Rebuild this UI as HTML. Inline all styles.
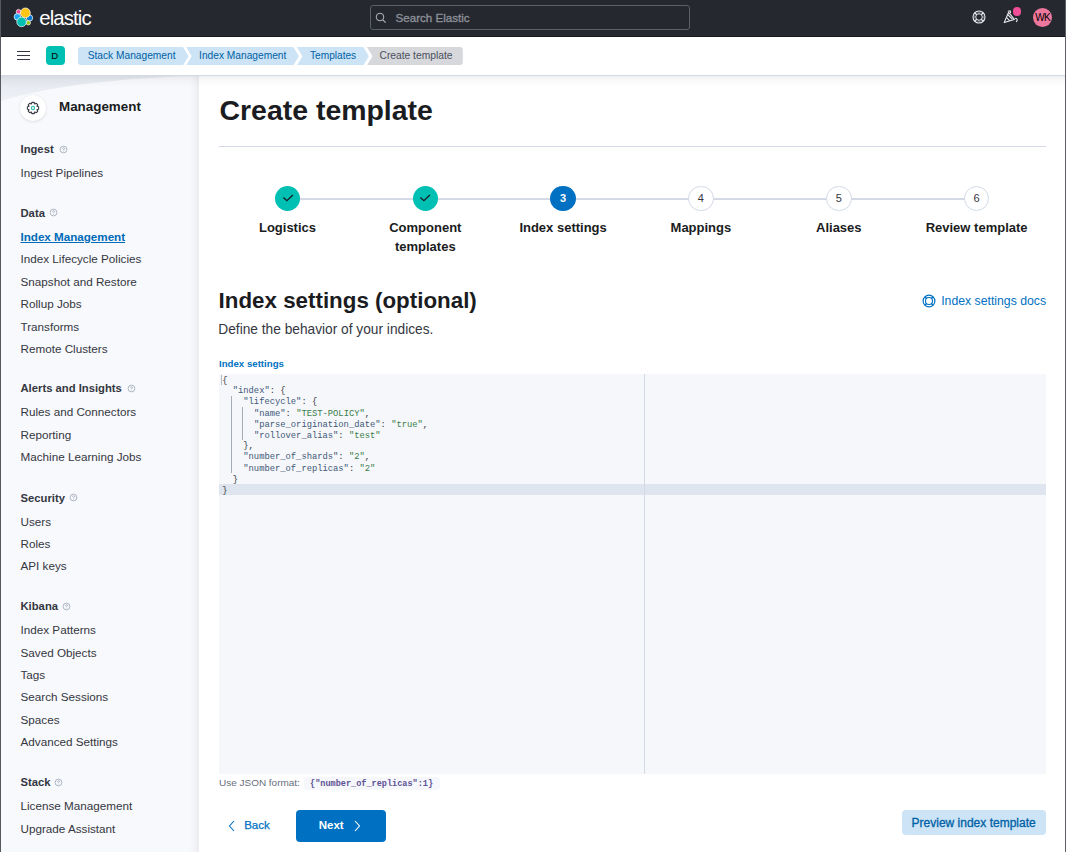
<!DOCTYPE html>
<html><head><meta charset="utf-8"><title>Create template</title>
<style>
html,body{margin:0;padding:0;}
body{width:1066px;height:852px;overflow:hidden;position:relative;background:#fff;font-family:"Liberation Sans",sans-serif;}
.r{position:absolute;box-sizing:content-box;}
.t{position:absolute;white-space:nowrap;}
.code{position:absolute;margin:0;font-family:"Liberation Mono",monospace;font-size:8.8px;line-height:10.185px;color:#000;transform:scaleY(1.08);transform-origin:0 0;}
.code .k{color:#3f5878;}
.code .s{color:#3a7d4a;}
.code .p{color:#343741;}
</style></head><body>
<div class="r" style="left:0px;top:0px;width:1066px;height:852px;background:#ffffff;"></div>
<div class="r" style="left:1px;top:76px;width:197px;height:776px;background:#f8f9fc;"></div>
<svg class="r" style="left:1px;top:76px" width="197" height="30" viewBox="0 0 197 30"><defs><linearGradient id="sg" x1="0" y1="0" x2="0" y2="1"><stop offset="0" stop-color="#e4e8ef"/><stop offset="1" stop-color="#eef0f5"/></linearGradient></defs><path d="M0 0 H197 C150 1 60 6 0 25 Z" fill="url(#sg)"/></svg>
<div class="r" style="left:189px;top:76px;width:10px;height:776px;background:linear-gradient(to right, rgba(130,136,148,0), rgba(130,136,148,0.06) 70%, rgba(130,136,148,0.16));"></div>
<div class="r" style="left:0px;top:0px;width:1066px;height:36px;background:#25282f;"></div>
<div class="r" style="left:0px;top:36px;width:1066px;height:1px;background:#17191d;"></div>
<div class="r" style="left:0px;top:75px;width:1066px;height:1px;background:#d3dae6;"></div>
<div class="r" style="left:1px;top:76px;width:1064px;height:11px;background:linear-gradient(rgba(60,60,60,0.075),rgba(60,60,60,0.03) 40%,rgba(60,60,60,0));"></div>
<div class="r" style="left:0px;top:0px;width:1px;height:852px;background:#55585f;"></div>
<div class="r" style="left:1065px;top:0px;width:1px;height:852px;background:#5d6066;"></div>
<svg class="r" style="left:13px;top:7px" width="22" height="22" viewBox="13 7 22 22">
<g stroke="#ffffff" stroke-width="0.7">
<circle cx="18.6" cy="11.8" r="2.4" fill="#f04e98"/>
<circle cx="17.4" cy="16.9" r="3.3" fill="#1ba9f5"/>
<circle cx="29.5" cy="17.9" r="3.2" fill="#0779d1"/>
<circle cx="28.3" cy="22.8" r="2.2" fill="#93c90e"/>
<circle cx="21.6" cy="21.9" r="4.8" fill="#00bfb3"/>
<circle cx="25.4" cy="12.9" r="4.9" fill="#fec514"/>
</g></svg>
<div class="t " style="left:39.30px;top:8.03px;font-size:20.4px;line-height:20.4px;color:#ffffff;font-weight:400;font-family:'Liberation Sans', sans-serif;letter-spacing:-0.9px;">elastic</div>
<div class="r" style="left:370px;top:5px;width:318px;height:23px;border:1px solid #5b5f67;border-radius:3px;background:#25282f"></div>
<svg class="r" style="left:375px;top:12px" width="12" height="12" viewBox="0 0 12 12"><circle cx="5" cy="5" r="3.8" fill="none" stroke="#b5b8be" stroke-width="1"/><path d="M7.8 7.8 L10.6 10.6" stroke="#b5b8be" stroke-width="1.1"/></svg>
<div class="t " style="left:395.50px;top:12.18px;font-size:11.6px;line-height:11.6px;color:#8b8f97;font-weight:400;font-family:'Liberation Sans', sans-serif;-webkit-text-stroke:0.35px #8b8f97;">Search Elastic</div>
<svg class="r" style="left:970.5px;top:9px" width="16" height="16" viewBox="0 0 16 16"><g fill="none" stroke="#e8eaee"><circle cx="8" cy="8" r="6.0" stroke-width="1.1"/><circle cx="8" cy="8" r="3.3" stroke-width="1.0"/><path d="M3.8 3.8 L5.7 5.7 M12.2 3.8 L10.3 5.7 M3.8 12.2 L5.7 10.3 M12.2 12.2 L10.3 10.3" stroke-width="1.3"/><path d="M6.5 3.4 Q8 3.1 9.5 3.4 M6.5 12.6 Q8 12.9 9.5 12.6 M3.4 6.5 Q3.1 8 3.4 9.5 M12.6 6.5 Q12.9 8 12.6 9.5" stroke-width="0.7" opacity="0.6"/></g></svg>
<svg class="r" style="left:1002px;top:9px" width="18" height="16" viewBox="0 0 18 16"><g fill="none" stroke="#e8eaee" stroke-width="1.1" stroke-linejoin="round" stroke-linecap="round"><path d="M6.6 3.3 L2.2 13.6 L12.4 10.4 Z"/><path d="M5.8 5.6 L10.2 10"/><path d="M4.7 8.6 L7.3 11.3"/><path d="M6.2 2.2 L8.2 1.8 L8.6 3.6"/><path d="M13.6 9.4 Q15.4 9.6 15.2 11.5 L14.4 12.6"/></g></svg>
<div class="r" style="left:1012.8px;top:7px;width:8.6px;height:8.6px;border-radius:50%;background:#f04e98"></div>
<div class="r" style="left:1033px;top:8px;width:19px;height:19px;border-radius:50%;background:#ee789d"></div>
<div class="t " style="left:1035.30px;top:13.14px;font-size:10.0px;line-height:10.0px;color:#000000;font-weight:400;font-family:'Liberation Sans', sans-serif;letter-spacing:-0.75px;">WK</div>
<div class="r" style="left:17px;top:51px;width:13px;height:1.3px;background:#343741;"></div>
<div class="r" style="left:17px;top:55.1px;width:13px;height:1.3px;background:#343741;"></div>
<div class="r" style="left:17px;top:59.2px;width:13px;height:1.3px;background:#343741;"></div>
<div class="r" style="left:46px;top:46px;width:19px;height:19px;border-radius:4px;background:#00bfb3"></div>
<div class="t " style="left:51.30px;top:50.96px;font-size:9.5px;line-height:9.5px;color:#000000;font-weight:400;font-family:'Liberation Sans', sans-serif;">D</div>
<div class="r" style="left:78px;top:47px;width:110.6px;height:18.4px;background:#cce4f5;clip-path:polygon(0 0, 105.0px 0, 110.6px 50%, 105.0px 100%, 0 100%);border-radius:3px 0 0 3px;"></div>
<div class="r" style="left:186.1px;top:47px;width:112.79999999999998px;height:18.4px;background:#cce4f5;clip-path:polygon(0 0, 107.19999999999999px 0, 112.79999999999998px 50%, 107.19999999999999px 100%, 0 100%, 5.6px 50%);"></div>
<div class="r" style="left:296.9px;top:47px;width:72.0px;height:18.4px;background:#cce4f5;clip-path:polygon(0 0, 66.4px 0, 72.0px 50%, 66.4px 100%, 0 100%, 5.6px 50%);"></div>
<div class="r" style="left:366.9px;top:47px;width:95.90000000000003px;height:18.4px;background:#d6d8dc;clip-path:polygon(0 0, 100% 0, 100% 100%, 0 100%, 5.6px 50%);border-radius:0 3px 3px 0;"></div>
<div class="t " style="left:87.70px;top:51.37px;font-size:10.2px;line-height:10.2px;color:#0061a6;font-weight:400;font-family:'Liberation Sans', sans-serif;">Stack Management</div>
<div class="t " style="left:199.10px;top:51.37px;font-size:10.2px;line-height:10.2px;color:#0061a6;font-weight:400;font-family:'Liberation Sans', sans-serif;">Index Management</div>
<div class="t " style="left:310.00px;top:51.41px;font-size:10.15px;line-height:10.15px;color:#0061a6;font-weight:400;font-family:'Liberation Sans', sans-serif;">Templates</div>
<div class="t " style="left:379.50px;top:51.32px;font-size:10.25px;line-height:10.25px;color:#4b505b;font-weight:400;font-family:'Liberation Sans', sans-serif;">Create template</div>
<div class="r" style="left:20px;top:94.5px;width:26px;height:26px;border-radius:50%;background:#fff;box-shadow:0 1px 3px rgba(0,0,0,0.10),0 0 1px rgba(0,0,0,0.08)"></div>
<svg class="r" style="left:26px;top:100.5px" width="14" height="14" viewBox="0 0 14 14"><path d="M11.16 5.57 L12.62 5.80 L12.62 8.20 L11.16 8.43 L10.95 8.93 L11.82 10.13 L10.13 11.82 L8.93 10.95 L8.43 11.16 L8.20 12.62 L5.80 12.62 L5.57 11.16 L5.07 10.95 L3.87 11.82 L2.18 10.13 L3.05 8.93 L2.84 8.43 L1.38 8.20 L1.38 5.80 L2.84 5.57 L3.05 5.07 L2.18 3.87 L3.87 2.18 L5.07 3.05 L5.57 2.84 L5.80 1.38 L8.20 1.38 L8.43 2.84 L8.93 3.05 L10.13 2.18 L11.82 3.87 L10.95 5.07 Z" fill="none" stroke="#343741" stroke-width="1.05" stroke-linejoin="round"/><circle cx="7" cy="7" r="1.6" fill="none" stroke="#3ebeb0" stroke-width="1.2"/></svg>
<div class="t " style="left:59.00px;top:99.66px;font-size:13.4px;line-height:13.4px;color:#1a1c21;font-weight:700;font-family:'Liberation Sans', sans-serif;">Management</div>
<div class="t " style="left:20.50px;top:144.18px;font-size:11.25px;line-height:11.25px;color:#343741;font-weight:700;font-family:'Liberation Sans', sans-serif;">Ingest</div>
<svg class="r" style="left:58.5px;top:144.5px" width="9" height="9" viewBox="0 0 9 9"><circle cx="4.5" cy="4.5" r="3.4" fill="none" stroke="#98a2b3" stroke-width="0.75"/><path d="M3.5 3.7 Q3.6 2.7 4.5 2.7 Q5.5 2.7 5.5 3.6 Q5.5 4.3 4.6 4.6 V5.3" fill="none" stroke="#98a2b3" stroke-width="0.75"/><circle cx="4.6" cy="6.3" r="0.4" fill="#98a2b3"/></svg>
<div class="t " style="left:20.50px;top:167.10px;font-size:11.7px;line-height:11.7px;color:#343741;font-weight:400;font-family:'Liberation Sans', sans-serif;">Ingest Pipelines</div>
<div class="t " style="left:20.50px;top:208.08px;font-size:11.25px;line-height:11.25px;color:#343741;font-weight:700;font-family:'Liberation Sans', sans-serif;">Data</div>
<svg class="r" style="left:49.0px;top:208.4px" width="9" height="9" viewBox="0 0 9 9"><circle cx="4.5" cy="4.5" r="3.4" fill="none" stroke="#98a2b3" stroke-width="0.75"/><path d="M3.5 3.7 Q3.6 2.7 4.5 2.7 Q5.5 2.7 5.5 3.6 Q5.5 4.3 4.6 4.6 V5.3" fill="none" stroke="#98a2b3" stroke-width="0.75"/><circle cx="4.6" cy="6.3" r="0.4" fill="#98a2b3"/></svg>
<div class="t " style="left:20.50px;top:231.00px;font-size:11.7px;line-height:11.7px;color:#006bb8;font-weight:700;font-family:'Liberation Sans', sans-serif;letter-spacing:-0.04px;text-decoration:underline;text-underline-offset:1px;text-decoration-thickness:1px;">Index Management</div>
<div class="t " style="left:20.50px;top:253.40px;font-size:11.7px;line-height:11.7px;color:#343741;font-weight:400;font-family:'Liberation Sans', sans-serif;">Index Lifecycle Policies</div>
<div class="t " style="left:20.50px;top:275.80px;font-size:11.7px;line-height:11.7px;color:#343741;font-weight:400;font-family:'Liberation Sans', sans-serif;">Snapshot and Restore</div>
<div class="t " style="left:20.50px;top:298.20px;font-size:11.7px;line-height:11.7px;color:#343741;font-weight:400;font-family:'Liberation Sans', sans-serif;">Rollup Jobs</div>
<div class="t " style="left:20.50px;top:320.60px;font-size:11.7px;line-height:11.7px;color:#343741;font-weight:400;font-family:'Liberation Sans', sans-serif;">Transforms</div>
<div class="t " style="left:20.50px;top:343.00px;font-size:11.7px;line-height:11.7px;color:#343741;font-weight:400;font-family:'Liberation Sans', sans-serif;">Remote Clusters</div>
<div class="t " style="left:20.50px;top:383.38px;font-size:11.25px;line-height:11.25px;color:#343741;font-weight:700;font-family:'Liberation Sans', sans-serif;">Alerts and Insights</div>
<svg class="r" style="left:126.5px;top:383.7px" width="9" height="9" viewBox="0 0 9 9"><circle cx="4.5" cy="4.5" r="3.4" fill="none" stroke="#98a2b3" stroke-width="0.75"/><path d="M3.5 3.7 Q3.6 2.7 4.5 2.7 Q5.5 2.7 5.5 3.6 Q5.5 4.3 4.6 4.6 V5.3" fill="none" stroke="#98a2b3" stroke-width="0.75"/><circle cx="4.6" cy="6.3" r="0.4" fill="#98a2b3"/></svg>
<div class="t " style="left:20.50px;top:406.30px;font-size:11.7px;line-height:11.7px;color:#343741;font-weight:400;font-family:'Liberation Sans', sans-serif;">Rules and Connectors</div>
<div class="t " style="left:20.50px;top:428.70px;font-size:11.7px;line-height:11.7px;color:#343741;font-weight:400;font-family:'Liberation Sans', sans-serif;">Reporting</div>
<div class="t " style="left:20.50px;top:451.10px;font-size:11.7px;line-height:11.7px;color:#343741;font-weight:400;font-family:'Liberation Sans', sans-serif;">Machine Learning Jobs</div>
<div class="t " style="left:20.50px;top:492.58px;font-size:11.25px;line-height:11.25px;color:#343741;font-weight:700;font-family:'Liberation Sans', sans-serif;">Security</div>
<svg class="r" style="left:69.0px;top:492.9px" width="9" height="9" viewBox="0 0 9 9"><circle cx="4.5" cy="4.5" r="3.4" fill="none" stroke="#98a2b3" stroke-width="0.75"/><path d="M3.5 3.7 Q3.6 2.7 4.5 2.7 Q5.5 2.7 5.5 3.6 Q5.5 4.3 4.6 4.6 V5.3" fill="none" stroke="#98a2b3" stroke-width="0.75"/><circle cx="4.6" cy="6.3" r="0.4" fill="#98a2b3"/></svg>
<div class="t " style="left:20.50px;top:515.50px;font-size:11.7px;line-height:11.7px;color:#343741;font-weight:400;font-family:'Liberation Sans', sans-serif;">Users</div>
<div class="t " style="left:20.50px;top:537.90px;font-size:11.7px;line-height:11.7px;color:#343741;font-weight:400;font-family:'Liberation Sans', sans-serif;">Roles</div>
<div class="t " style="left:20.50px;top:560.30px;font-size:11.7px;line-height:11.7px;color:#343741;font-weight:400;font-family:'Liberation Sans', sans-serif;">API keys</div>
<div class="t " style="left:20.50px;top:601.18px;font-size:11.25px;line-height:11.25px;color:#343741;font-weight:700;font-family:'Liberation Sans', sans-serif;">Kibana</div>
<svg class="r" style="left:61.5px;top:601.5px" width="9" height="9" viewBox="0 0 9 9"><circle cx="4.5" cy="4.5" r="3.4" fill="none" stroke="#98a2b3" stroke-width="0.75"/><path d="M3.5 3.7 Q3.6 2.7 4.5 2.7 Q5.5 2.7 5.5 3.6 Q5.5 4.3 4.6 4.6 V5.3" fill="none" stroke="#98a2b3" stroke-width="0.75"/><circle cx="4.6" cy="6.3" r="0.4" fill="#98a2b3"/></svg>
<div class="t " style="left:20.50px;top:624.10px;font-size:11.7px;line-height:11.7px;color:#343741;font-weight:400;font-family:'Liberation Sans', sans-serif;">Index Patterns</div>
<div class="t " style="left:20.50px;top:646.50px;font-size:11.7px;line-height:11.7px;color:#343741;font-weight:400;font-family:'Liberation Sans', sans-serif;">Saved Objects</div>
<div class="t " style="left:20.50px;top:668.90px;font-size:11.7px;line-height:11.7px;color:#343741;font-weight:400;font-family:'Liberation Sans', sans-serif;">Tags</div>
<div class="t " style="left:20.50px;top:691.30px;font-size:11.7px;line-height:11.7px;color:#343741;font-weight:400;font-family:'Liberation Sans', sans-serif;">Search Sessions</div>
<div class="t " style="left:20.50px;top:713.70px;font-size:11.7px;line-height:11.7px;color:#343741;font-weight:400;font-family:'Liberation Sans', sans-serif;">Spaces</div>
<div class="t " style="left:20.50px;top:736.10px;font-size:11.7px;line-height:11.7px;color:#343741;font-weight:400;font-family:'Liberation Sans', sans-serif;">Advanced Settings</div>
<div class="t " style="left:20.50px;top:777.18px;font-size:11.25px;line-height:11.25px;color:#343741;font-weight:700;font-family:'Liberation Sans', sans-serif;">Stack</div>
<svg class="r" style="left:54.0px;top:777.5px" width="9" height="9" viewBox="0 0 9 9"><circle cx="4.5" cy="4.5" r="3.4" fill="none" stroke="#98a2b3" stroke-width="0.75"/><path d="M3.5 3.7 Q3.6 2.7 4.5 2.7 Q5.5 2.7 5.5 3.6 Q5.5 4.3 4.6 4.6 V5.3" fill="none" stroke="#98a2b3" stroke-width="0.75"/><circle cx="4.6" cy="6.3" r="0.4" fill="#98a2b3"/></svg>
<div class="t " style="left:20.50px;top:800.10px;font-size:11.7px;line-height:11.7px;color:#343741;font-weight:400;font-family:'Liberation Sans', sans-serif;">License Management</div>
<div class="t " style="left:20.50px;top:822.50px;font-size:11.7px;line-height:11.7px;color:#343741;font-weight:400;font-family:'Liberation Sans', sans-serif;">Upgrade Assistant</div>
<div class="t " style="left:219.50px;top:95.92px;font-size:28.45px;line-height:28.45px;color:#1a1c21;font-weight:700;font-family:'Liberation Sans', sans-serif;">Create template</div>
<div class="r" style="left:219px;top:146px;width:827px;height:1px;background:#d3dae6;"></div>
<div class="r" style="left:287.5px;top:197.5px;width:689.1px;height:2px;background:#d3dae6;"></div>
<div class="r" style="left:275.0px;top:186px;width:25px;height:25px;border-radius:50%;background:#00bfb3"></div>
<svg class="r" style="left:280.5px;top:191.5px" width="14" height="14" viewBox="0 0 14 14"><path d="M2.4 5.5 L5.9 8.7 L11.9 3.0" fill="none" stroke="#1a1c21" stroke-width="1.35"/></svg>
<div class="t" style="left:218.5px;top:219.0455px;width:138px;text-align:center;font-size:13.0px;line-height:18.9px;color:#1a1c21;font-weight:700;font-family:'Liberation Sans', sans-serif">Logistics</div>
<div class="r" style="left:412.8px;top:186px;width:25px;height:25px;border-radius:50%;background:#00bfb3"></div>
<svg class="r" style="left:418.3px;top:191.5px" width="14" height="14" viewBox="0 0 14 14"><path d="M2.4 5.5 L5.9 8.7 L11.9 3.0" fill="none" stroke="#1a1c21" stroke-width="1.35"/></svg>
<div class="t" style="left:356.3px;top:219.0455px;width:138px;text-align:center;font-size:13.0px;line-height:18.9px;color:#1a1c21;font-weight:700;font-family:'Liberation Sans', sans-serif">Component<br>templates</div>
<div class="r" style="left:550.2px;top:185.6px;width:25.8px;height:25.8px;border-radius:50%;background:#0071c2"></div>
<div class="t" style="left:550.6px;top:192.5px;width:25px;text-align:center;font-size:11px;line-height:11px;color:#fff;font-weight:700;font-family:'Liberation Sans', sans-serif">3</div>
<div class="t" style="left:494.1px;top:219.0455px;width:138px;text-align:center;font-size:13.0px;line-height:18.9px;color:#1a1c21;font-weight:700;font-family:'Liberation Sans', sans-serif">Index settings</div>
<div class="r" style="left:688.0px;top:185.6px;width:23.8px;height:23.8px;border-radius:50%;background:#fff;border:1px solid #d3dae6"></div>
<div class="t" style="left:688.4px;top:192.5px;width:25px;text-align:center;font-size:11px;line-height:11px;color:#343741;font-weight:400;font-family:'Liberation Sans', sans-serif">4</div>
<div class="t" style="left:631.9px;top:219.0455px;width:138px;text-align:center;font-size:13.0px;line-height:18.9px;color:#1a1c21;font-weight:700;font-family:'Liberation Sans', sans-serif">Mappings</div>
<div class="r" style="left:825.9px;top:185.6px;width:23.8px;height:23.8px;border-radius:50%;background:#fff;border:1px solid #d3dae6"></div>
<div class="t" style="left:826.3px;top:192.5px;width:25px;text-align:center;font-size:11px;line-height:11px;color:#343741;font-weight:400;font-family:'Liberation Sans', sans-serif">5</div>
<div class="t" style="left:769.8px;top:219.0455px;width:138px;text-align:center;font-size:13.0px;line-height:18.9px;color:#1a1c21;font-weight:700;font-family:'Liberation Sans', sans-serif">Aliases</div>
<div class="r" style="left:963.7px;top:185.6px;width:23.8px;height:23.8px;border-radius:50%;background:#fff;border:1px solid #d3dae6"></div>
<div class="t" style="left:964.1px;top:192.5px;width:25px;text-align:center;font-size:11px;line-height:11px;color:#343741;font-weight:400;font-family:'Liberation Sans', sans-serif">6</div>
<div class="t" style="left:907.6px;top:219.0455px;width:138px;text-align:center;font-size:13.0px;line-height:18.9px;color:#1a1c21;font-weight:700;font-family:'Liberation Sans', sans-serif">Review template</div>
<div class="t " style="left:218.60px;top:290.08px;font-size:22.35px;line-height:22.35px;color:#1a1c21;font-weight:700;font-family:'Liberation Sans', sans-serif;">Index settings (optional)</div>
<svg class="r" style="left:921.5px;top:293.5px" width="14" height="14" viewBox="0 0 14 14"><g fill="none" stroke="#0071c2"><circle cx="7" cy="7" r="5.9" stroke-width="1.2"/><circle cx="7" cy="7" r="3.5" stroke-width="1.1"/><path d="M2.8 2.8 L4.6 4.6 M11.2 2.8 L9.4 4.6 M2.8 11.2 L4.6 9.4 M11.2 11.2 L9.4 9.4" stroke-width="1.4"/></g></svg>
<div class="t " style="left:941.20px;top:294.63px;font-size:12.25px;line-height:12.25px;color:#0071c2;font-weight:400;font-family:'Liberation Sans', sans-serif;">Index settings docs</div>
<div class="t " style="left:218.30px;top:322.89px;font-size:13.72px;line-height:13.72px;color:#343741;font-weight:400;font-family:'Liberation Sans', sans-serif;">Define the behavior of your indices.</div>
<div class="t " style="left:219.00px;top:358.81px;font-size:9.67px;line-height:9.67px;color:#0071c2;font-weight:700;font-family:'Liberation Sans', sans-serif;">Index settings</div>
<div class="r" style="left:219px;top:374px;width:827px;height:400px;background:#f5f7fa;"></div>
<div class="r" style="left:219px;top:484px;width:827px;height:11px;background:#dfe5ef;"></div>
<div class="r" style="left:644px;top:374px;width:1px;height:400px;background:#d3dae6;"></div>
<div class="r" style="left:221px;top:375px;width:1px;height:10px;background:#b4bac4;"></div>
<div class="r" style="left:231px;top:396px;width:1px;height:77px;background:#a7adb6;"></div>
<div class="r" style="left:242px;top:407px;width:1px;height:33px;background:#a7adb6;"></div>
<pre class="code" style="left:222.2px;top:374.9px"><span class="p">{</span>
  <span class="k">"index"</span><span class="p">: {</span>
    <span class="k">"lifecycle"</span><span class="p">: {</span>
      <span class="k">"name"</span><span class="p">: </span><span class="s">"TEST-POLICY"</span><span class="p">,</span>
      <span class="k">"parse_origination_date"</span><span class="p">: </span><span class="s">"true"</span><span class="p">,</span>
      <span class="k">"rollover_alias"</span><span class="p">: </span><span class="s">"test"</span>
    <span class="p">},</span>
    <span class="k">"number_of_shards"</span><span class="p">: </span><span class="s">"2"</span><span class="p">,</span>
    <span class="k">"number_of_replicas"</span><span class="p">: </span><span class="s">"2"</span>
  <span class="p">}</span>
<span class="p">}</span></pre>
<div class="t " style="left:219.00px;top:777.55px;font-size:9.98px;line-height:9.98px;color:#69707d;font-weight:400;font-family:'Liberation Sans', sans-serif;">Use JSON format:</div>
<div class="r" style="left:303.5px;top:777px;width:136px;height:13px;border-radius:3px;background:#f5f7fa"></div>
<div class="t " style="left:310.00px;top:779.65px;font-size:8.55px;line-height:8.55px;color:#5e5296;font-weight:700;font-family:'Liberation Mono', monospace;">{"number_of_replicas":1}</div>
<svg class="r" style="left:227px;top:819px" width="10" height="14" viewBox="0 0 10 14"><path d="M7 2 L2.5 7 L7 12" fill="none" stroke="#0071c2" stroke-width="1.1"/></svg>
<div class="t " style="left:244.20px;top:820.27px;font-size:11.5px;line-height:11.5px;color:#0071c2;font-weight:400;font-family:'Liberation Sans', sans-serif;-webkit-text-stroke:0.25px #0071c2;">Back</div>
<div class="r" style="left:296px;top:810px;width:90px;height:32px;border-radius:4px;background:#0071c2"></div>
<div class="t " style="left:318.70px;top:820.27px;font-size:11.5px;line-height:11.5px;color:#ffffff;font-weight:700;font-family:'Liberation Sans', sans-serif;">Next</div>
<svg class="r" style="left:352px;top:819px" width="10" height="14" viewBox="0 0 10 14"><path d="M3 2 L7.5 7 L3 12" fill="none" stroke="#ffffff" stroke-width="1.1"/></svg>
<div class="r" style="left:902px;top:810px;width:144px;height:25px;border-radius:4px;background:#cce4f5"></div>
<div class="t " style="left:911.60px;top:816.64px;font-size:12.0px;line-height:12.0px;color:#0061a6;font-weight:400;font-family:'Liberation Sans', sans-serif;-webkit-text-stroke:0.3px #0061a6;">Preview index template</div>
</body></html>
